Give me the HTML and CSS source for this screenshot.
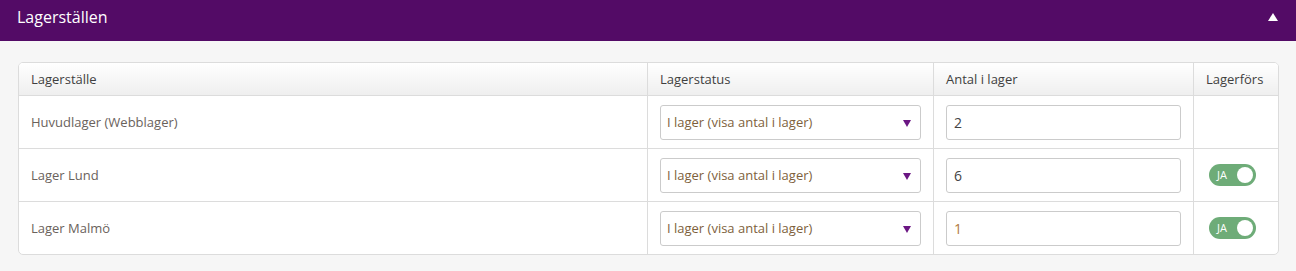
FILE: index.html
```html
<!DOCTYPE html>
<html lang="sv">
<head>
    <meta charset="UTF-8">
    <title>Lagerställen</title>
    <link rel="stylesheet" href="styles.css">
</head>
<body>
    <div class="panel-head">
        <span class="panel-title">Lagerställen</span>
        <span class="caret-up"></span>
    </div>
    <div class="panel-body">
        <div class="table-wrap">
            <table class="stock-table">
                <thead>
                    <tr>
                        <th class="col-name">Lagerställe</th>
                        <th class="col-status">Lagerstatus</th>
                        <th class="col-qty">Antal i lager</th>
                        <th class="col-track">Lagerförs</th>
                    </tr>
                </thead>
                <tbody>
                    <tr>
                        <td>Huvudlager (Webblager)</td>
                        <td><div class="select">I lager (visa antal i lager)<span class="caret-down"></span></div></td>
                        <td><div class="input">2</div></td>
                        <td></td>
                    </tr>
                    <tr>
                        <td>Lager Lund</td>
                        <td><div class="select">I lager (visa antal i lager)<span class="caret-down"></span></div></td>
                        <td><div class="input">6</div></td>
                        <td><span class="toggle">JA<span class="knob"></span></span></td>
                    </tr>
                    <tr>
                        <td>Lager Malmö</td>
                        <td><div class="select">I lager (visa antal i lager)<span class="caret-down"></span></div></td>
                        <td><div class="input input-warm">1</div></td>
                        <td><span class="toggle">JA<span class="knob"></span></span></td>
                    </tr>
                </tbody>
            </table>
        </div>
    </div>
</body>
</html>
```

FILE: styles.css
```css
body {
    margin: 0;
    background-color: #f6f6f6;
    font-family: 'Open Sans', sans-serif;
    color: #6a625c;
}
.panel-head {
    height: 41px;
    background-color: #530b66;
    display: flex;
    align-items: center;
    justify-content: space-between;
    padding: 0 18px 0 17px;
}
.panel-title {
    color: #fff;
    font-size: 16px;
    margin-top: -8px;
}
.caret-up {
    width: 0;
    height: 0;
    border-left: 5px solid transparent;
    border-right: 5px solid transparent;
    border-bottom: 8px solid #fff;
    margin-top: -8px;
}
.panel-body {
    padding: 21px 17px 0 18px;
}
.table-wrap {
    background-color: #fff;
    border: 1px solid #dcdcdc;
    border-radius: 5px;
    overflow: hidden;
}
.stock-table {
    width: 100%;
    border-collapse: collapse;
    font-size: 13px;
}
.stock-table th {
    height: 32px;
    text-align: left;
    font-weight: 400;
    color: #3f3f3f;
    padding: 0 12px;
    background: linear-gradient(#fff, #efefef);
    border-bottom: 1px solid #dcdcdc;
    border-left: 1px solid #dcdcdc;
}
.stock-table td {
    height: 52px;
    padding: 0 12px;
    border-top: 1px solid #dcdcdc;
    border-left: 1px solid #dcdcdc;
}
.stock-table th:first-child,
.stock-table td:first-child {
    border-left: none;
}
.stock-table tbody tr:first-child td {
    border-top: none;
}
.col-name { width: 604px; }
.col-status { width: 261px; }
.col-qty { width: 235px; }
.select {
    position: relative;
    height: 33px;
    line-height: 33px;
    border: 1px solid #cbcbcb;
    border-radius: 3px;
    padding-left: 6px;
    color: #7e5f3c;
}
.caret-down {
    position: absolute;
    right: 9px;
    top: 14px;
    width: 0;
    height: 0;
    border-left: 4px solid transparent;
    border-right: 4px solid transparent;
    border-top: 7px solid #6b1683;
}
.input {
    height: 33px;
    line-height: 33px;
    border: 1px solid #cbcbcb;
    border-radius: 3px;
    padding-left: 7px;
    font-size: 14px;
    color: #444;
}
.input-warm {
    color: #b27a3e;
}
.toggle {
    position: relative;
    display: inline-block;
    width: 47px;
    height: 22px;
    line-height: 22px;
    border-radius: 11px;
    background-color: #6eac78;
    color: #fff;
    font-size: 11px;
    padding-left: 8px;
    box-sizing: border-box;
    margin-left: 3px;
    vertical-align: middle;
}
.knob {
    position: absolute;
    right: 3px;
    top: 3px;
    width: 16px;
    height: 16px;
    border-radius: 50%;
    background-color: #fff;
}
```
